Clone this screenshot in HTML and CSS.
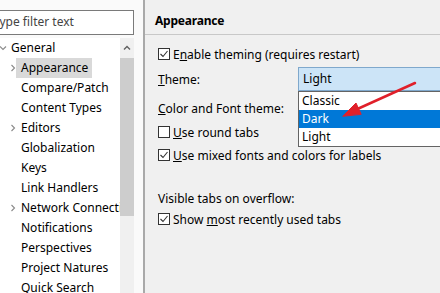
FILE: index.html
```html
<!DOCTYPE html>
<html>
<head>
<meta charset="utf-8">
<link rel="stylesheet" href="styles.css">
</head>
<body>
<div class="win">
  <aside class="left">
    <div class="filter">Type filter text</div>
    <div class="tree">
      <ul class="rows">
        <li class="row top"><svg class="chev" viewBox="0 0 8 8"><path d="M1 2.5 L4 5.5 L7 2.5" /></svg><span class="lbl">General</span></li>
        <li class="row child"><svg class="chev" viewBox="0 0 8 8"><path d="M2.5 1 L5.5 4 L2.5 7" /></svg><span class="lbl sel">Appearance</span></li>
        <li class="row child"><span class="nochev"></span><span class="lbl">Compare/Patch</span></li>
        <li class="row child"><span class="nochev"></span><span class="lbl">Content Types</span></li>
        <li class="row child"><svg class="chev" viewBox="0 0 8 8"><path d="M2.5 1 L5.5 4 L2.5 7" /></svg><span class="lbl">Editors</span></li>
        <li class="row child"><span class="nochev"></span><span class="lbl">Globalization</span></li>
        <li class="row child"><span class="nochev"></span><span class="lbl">Keys</span></li>
        <li class="row child"><span class="nochev"></span><span class="lbl">Link Handlers</span></li>
        <li class="row child"><svg class="chev" viewBox="0 0 8 8"><path d="M2.5 1 L5.5 4 L2.5 7" /></svg><span class="lbl">Network Connections</span></li>
        <li class="row child"><span class="nochev"></span><span class="lbl">Notifications</span></li>
        <li class="row child"><span class="nochev"></span><span class="lbl">Perspectives</span></li>
        <li class="row child"><span class="nochev"></span><span class="lbl">Project Natures</span></li>
        <li class="row child"><span class="nochev"></span><span class="lbl">Quick Search</span></li>
      </ul>
      <div class="vscroll">
        <div class="up"><svg viewBox="0 0 8 6"><path d="M1 4.5 L4 1.5 L7 4.5" /></svg></div>
        <div class="thumb"></div>
      </div>
    </div>
  </aside>
  <div class="sash"></div>
  <main class="right">
    <header class="title">Appearance</header>
    <div class="body">
      <div class="check"><svg class="box" viewBox="0 0 12 12"><rect x="0.5" y="0.5" width="11" height="11" /><path class="tick" d="M2.5 6 L5 8.5 L9.5 3" /></svg><span>E<u>n</u>able theming (requires restart)</span></div>
      <div class="field theme">
        <span class="flabel"><u>T</u>heme:</span>
        <div class="combo">Light
          <ul class="drop">
            <li>Classic</li>
            <li class="hi">Dark</li>
            <li>Light</li>
          </ul>
        </div>
      </div>
      <div class="field cft"><span class="flabel"><u>C</u>olor and Font theme:</span></div>
      <div class="check round"><svg class="box" viewBox="0 0 12 12"><rect x="0.5" y="0.5" width="11" height="11" /></svg><span><u>U</u>se round tabs</span></div>
      <div class="check mixed"><svg class="box" viewBox="0 0 12 12"><rect x="0.5" y="0.5" width="11" height="11" /><path class="tick" d="M2.5 6 L5 8.5 L9.5 3" /></svg><span><u>U</u>se mixed fonts and colors for labels</span></div>
      <div class="plain">Visible tabs on overflow:</div>
      <div class="check"><svg class="box" viewBox="0 0 12 12"><rect x="0.5" y="0.5" width="11" height="11" /><path class="tick" d="M2.5 6 L5 8.5 L9.5 3" /></svg><span>Show <u>m</u>ost recently used tabs</span></div>
    </div>
  </main>
  <svg class="arrow" viewBox="0 0 440 293"><path d="M415 83 L353 111" /><path class="head" d="M343 116 L356 103 L361 114 Z" /></svg>
</div>
</body>
</html>
```
FILE: styles.css
```css
* { box-sizing: border-box; }
html, body { margin: 0; padding: 0; }
body {
  width: 440px; height: 293px; overflow: hidden;
  font-family: "Noto Sans", "Open Sans", sans-serif;
  font-size: 12px; color: #000; background: #f0f0f0;
}
ul { list-style: none; margin: 0; padding: 0; }
.win { position: relative; display: flex; height: 293px; }
.left {
  width: 152px; margin-left: -10px; flex: none;
  background: #fafafa; display: flex; flex-direction: column;
}
.filter {
  margin-top: 10px; width: 144px; height: 25px;
  border: 1px solid #7a7a7a; background: #fff;
  padding: 0 2px; line-height: 22px; color: #444; white-space: nowrap;
}
.tree { margin-top: 3px; width: 144px; flex: 1; display: flex; background: #fff; overflow: hidden; }
.rows { flex: 1; overflow: hidden; }
.row { height: 20px; display: flex; align-items: center; white-space: nowrap; }
.row.top { padding-left: 9px; }
.row.child { padding-left: 19px; }
.chev { width: 8px; height: 8px; fill: none; stroke: #8a8a8a; stroke-width: 1.1; flex: none; }
.nochev { width: 8px; flex: none; }
.lbl { padding: 0 3px 0 3px; line-height: 20px; margin-left: 1px; }
.sel { background: #d9d9d9; padding: 0 4px 0 5px; margin-left: -1px; }
.vscroll { width: 14px; flex: none; background: #f0f0f0; display: flex; flex-direction: column; }
.up { height: 20px; display: flex; align-items: center; justify-content: center; }
.up svg { width: 8px; height: 6px; fill: none; stroke: #606060; stroke-width: 1.4; }
.thumb { height: 158px; background: #cdcdcd; }
.sash { width: 1px; flex: none; background: #fafafa; }
.right { flex: 1; border-left: 2px solid #a9a9a9; display: flex; flex-direction: column; }
.title {
  height: 35px; padding: 13px 0 0 10px; font-weight: bold;
  border-bottom: 1px solid #c8c8c8; line-height: 16px; letter-spacing: -0.2px;
}
.body { padding: 9px 0 0 13px; }
.check { display: flex; align-items: center; height: 20px; }
.box { width: 12px; height: 12px; margin-right: 3px; flex: none; }
.box rect { fill: #fff; stroke: #333; stroke-width: 1; }
.box .tick { fill: none; stroke: #333; stroke-width: 1.1; }
.field { display: flex; align-items: center; height: 24px; }
.theme { margin-top: 3px; }
.flabel { width: 140px; flex: none; }
.combo {
  position: relative; flex: 1; height: 24px; margin-right: -10px;
  background: #cce4f7; border: 1px solid #7fa8cc; padding-left: 4px; line-height: 22px;
}
.drop {
  position: absolute; left: -1px; top: 23px; right: 0;
  background: #fff; border: 1px solid #646464;
}
.drop li { height: 18px; line-height: 18px; padding-left: 3px; }
.drop li.hi { background: #0078d7; color: #fff; }
.cft { margin-top: 5px; }
.round { margin-top: 2px; }
.mixed { margin-top: 3px; }
.plain { margin-top: 24px; height: 20px; line-height: 20px; }
.arrow { position: absolute; left: 0; top: 0; width: 440px; height: 293px; pointer-events: none; }
.arrow path { fill: none; stroke: #e0202a; stroke-width: 2.5; stroke-linecap: round; }
.arrow .head { fill: #e0202a; stroke: #e0202a; stroke-width: 1; stroke-linejoin: round; }
```
